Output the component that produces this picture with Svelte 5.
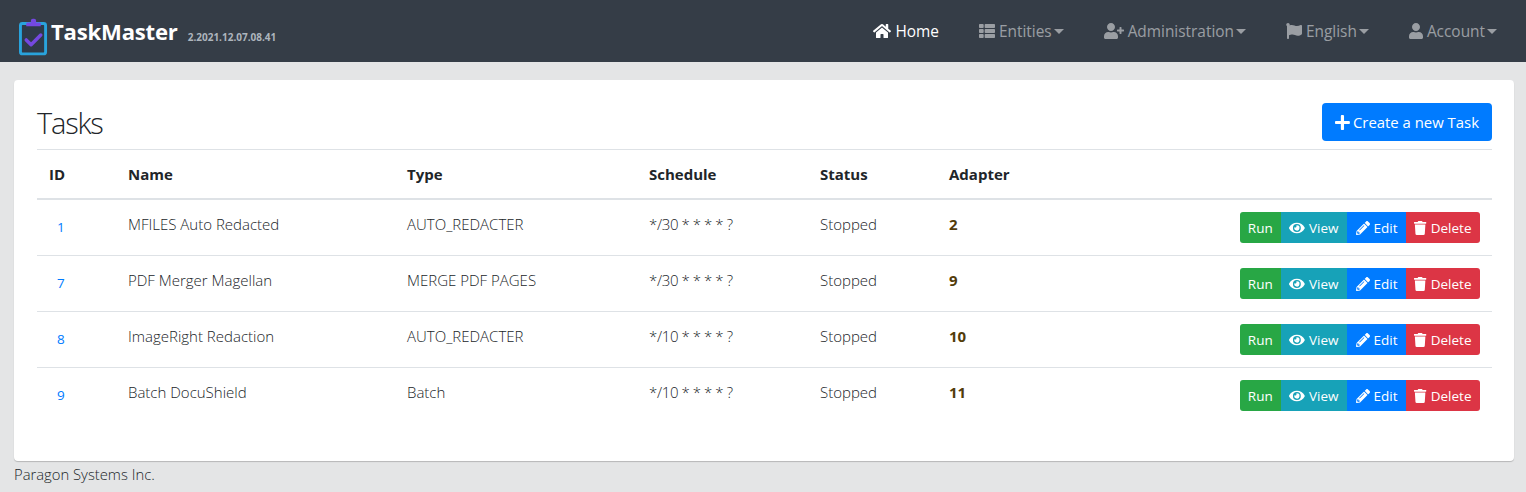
<script>
  const icons = {
    home: ['0 0 576 512', 'M280.37 148.26L96 300.11V464a16 16 0 0 0 16 16l112.06-.29a16 16 0 0 0 15.92-16V368a16 16 0 0 1 16-16h64a16 16 0 0 1 16 16v95.64a16 16 0 0 0 16 16.05L464 480a16 16 0 0 0 16-16V300L295.67 148.26a12.19 12.19 0 0 0-15.3 0zM571.6 251.47L488 182.56V44.05a12 12 0 0 0-12-12h-56a12 12 0 0 0-12 12v72.61L318.47 43a48 48 0 0 0-61 0L4.34 251.47a12 12 0 0 0-1.6 16.9l25.5 31A12 12 0 0 0 45.15 301l235.22-193.74a12.19 12.19 0 0 1 15.3 0L530.9 301a12 12 0 0 0 16.9-1.6l25.5-31a12 12 0 0 0-1.7-16.93z'],
    list: ['0 0 512 512', 'M149.333 216v80c0 13.255-10.745 24-24 24H24c-13.255 0-24-10.745-24-24v-80c0-13.255 10.745-24 24-24h101.333c13.255 0 24 10.745 24 24zM0 376v80c0 13.255 10.745 24 24 24h101.333c13.255 0 24-10.745 24-24v-80c0-13.255-10.745-24-24-24H24c-13.255 0-24 10.745-24 24zM125.333 32H24C10.745 32 0 42.745 0 56v80c0 13.255 10.745 24 24 24h101.333c13.255 0 24-10.745 24-24V56c0-13.255-10.745-24-24-24zm80 448H488c13.255 0 24-10.745 24-24v-80c0-13.255-10.745-24-24-24H205.333c-13.255 0-24 10.745-24 24v80c0 13.255 10.745 24 24 24zm-24-424v80c0 13.255 10.745 24 24 24H488c13.255 0 24-10.745 24-24V56c0-13.255-10.745-24-24-24H205.333c-13.255 0-24 10.745-24 24zm24 264H488c13.255 0 24-10.745 24-24v-80c0-13.255-10.745-24-24-24H205.333c-13.255 0-24 10.745-24 24v80c0 13.255 10.745 24 24 24z'],
    userPlus: ['0 0 640 512', 'M624 208h-64v-64c0-8.8-7.2-16-16-16h-32c-8.8 0-16 7.2-16 16v64h-64c-8.8 0-16 7.2-16 16v32c0 8.8 7.2 16 16 16h64v64c0 8.8 7.2 16 16 16h32c8.8 0 16-7.2 16-16v-64h64c8.8 0 16-7.2 16-16v-32c0-8.8-7.2-16-16-16zm-400 48c70.7 0 128-57.3 128-128S294.7 0 224 0 96 57.3 96 128s57.3 128 128 128zm89.6 32h-16.7c-22.2 10.2-46.9 16-72.9 16s-50.6-5.8-72.9-16h-16.7C60.2 288 0 348.2 0 422.4V464c0 26.5 21.5 48 48 48h352c26.5 0 48-21.5 48-48v-41.6c0-74.2-60.2-134.4-134.4-134.4z'],
    flag: ['0 0 512 512', 'M349.565 98.783C295.978 98.783 251.721 64 184.348 64c-24.955 0-47.309 4.384-68.045 12.013a55.947 55.947 0 0 0 3.586-23.562C118.117 24.015 94.806 1.206 66.338.048 34.345-1.254 8 24.296 8 56c0 19.026 9.497 35.825 24 45.945V488c0 13.255 10.745 24 24 24h16c13.255 0 24-10.745 24-24v-94.4c28.311-12.064 63.582-22.122 114.435-22.122 53.588 0 97.844 34.783 165.217 34.783 48.169 0 86.667-16.294 122.505-40.858C506.84 359.452 512 349.571 512 339.045v-243.1c0-23.393-24.269-38.87-45.485-29.016-34.338 15.948-76.454 31.854-116.95 31.854z'],
    user: ['0 0 448 512', 'M224 256c70.7 0 128-57.3 128-128S294.7 0 224 0 96 57.3 96 128s57.3 128 128 128zm89.6 32h-16.7c-22.2 10.2-46.9 16-72.9 16s-50.6-5.8-72.9-16h-16.7C60.2 288 0 348.2 0 422.4V464c0 26.5 21.5 48 48 48h352c26.5 0 48-21.5 48-48v-41.6c0-74.2-60.2-134.4-134.4-134.4z'],
    plus: ['0 0 448 512', 'M416 208H272V64c0-17.67-14.33-32-32-32h-32c-17.67 0-32 14.33-32 32v144H32c-17.67 0-32 14.33-32 32v32c0 17.67 14.33 32 32 32h144v144c0 17.67 14.33 32 32 32h32c17.67 0 32-14.33 32-32V304h144c17.67 0 32-14.33 32-32v-32c0-17.67-14.33-32-32-32z'],
    eye: ['0 0 576 512', 'M572.52 241.4C518.29 135.59 410.93 64 288 64S57.68 135.64 3.48 241.41a32.35 32.35 0 0 0 0 29.19C57.71 376.41 165.07 448 288 448s230.32-71.64 284.52-177.41a32.35 32.35 0 0 0 0-29.19zM288 400a144 144 0 1 1 144-144 143.93 143.93 0 0 1-144 144zm0-240a95.31 95.31 0 0 0-25.31 3.79 47.85 47.85 0 0 1-66.9 66.9A95.78 95.78 0 1 0 288 160z'],
    pencil: ['0 0 512 512', 'M497.9 142.1l-46.1 46.1c-4.7 4.7-12.3 4.7-17 0l-111-111c-4.7-4.7-4.7-12.3 0-17l46.1-46.1c18.7-18.7 49.1-18.7 67.9 0l60.1 60.1c18.8 18.7 18.8 49.1 0 67.9zM284.2 99.8L21.6 362.4.4 483.9c-2.9 16.4 11.4 30.6 27.8 27.8l121.5-21.3 262.6-262.6c4.7-4.7 4.7-12.3 0-17l-111-111c-4.8-4.7-12.4-4.7-17.1 0zM124.1 339.9c-5.5-5.5-5.5-14.3 0-19.8l154-154c5.5-5.5 14.3-5.5 19.8 0s5.5 14.3 0 19.8l-154 154c-5.5 5.5-14.3 5.5-19.8 0zM88 424h48v36.3l-64.5 11.3-31.1-31.1L51.7 376H88v48z'],
    trash: ['0 0 448 512', 'M432 32H312l-9.4-18.7A24 24 0 0 0 281.1 0H166.8a23.72 23.72 0 0 0-21.4 13.3L136 32H16A16 16 0 0 0 0 48v32a16 16 0 0 0 16 16h416a16 16 0 0 0 16-16V48a16 16 0 0 0-16-16zM53.2 467a48 48 0 0 0 47.9 45h245.8a48 48 0 0 0 47.9-45L416 128H32z']
  };

  const nav = [
    { label: 'Home', icon: 'home', active: true },
    { label: 'Entities', icon: 'list', caret: true },
    { label: 'Administration', icon: 'userPlus', caret: true },
    { label: 'English', icon: 'flag', caret: true },
    { label: 'Account', icon: 'user', caret: true }
  ];

  const tasks = [
    { id: 1, name: 'MFILES Auto Redacted', type: 'AUTO_REDACTER', schedule: '*/30 * * * * ?', status: 'Stopped', adapter: 2 },
    { id: 7, name: 'PDF Merger Magellan', type: 'MERGE PDF PAGES', schedule: '*/30 * * * * ?', status: 'Stopped', adapter: 9 },
    { id: 8, name: 'ImageRight Redaction', type: 'AUTO_REDACTER', schedule: '*/10 * * * * ?', status: 'Stopped', adapter: 10 },
    { id: 9, name: 'Batch DocuShield', type: 'Batch', schedule: '*/10 * * * * ?', status: 'Stopped', adapter: 11 }
  ];
</script>

{#snippet icon(name)}
  <svg class="ico" viewBox={icons[name][0]} aria-hidden="true"><path fill="currentColor" d={icons[name][1]} /></svg>
{/snippet}

<header class="navbar">
  <a class="brand" href="#top">
    <svg class="logo" viewBox="0 0 30 38" aria-hidden="true">
      <rect x="1.5" y="5" width="26" height="31.5" rx="2" fill="#2f3a48" stroke="#29a3dc" stroke-width="3" />
      <path d="M7.5 8V5.4a1.4 1.4 0 0 1 1.4-1.4h3.4V2a2 2 0 0 1 2-2h1.4a2 2 0 0 1 2 2v2h3.4a1.4 1.4 0 0 1 1.4 1.4V8z" fill="#7448e0" />
      <path d="M7.5 22l5 5 10-10" fill="none" stroke="#7448e0" stroke-width="3.6" stroke-linecap="round" stroke-linejoin="round" />
    </svg>
    <span class="title">TaskMaster</span>
    <span class="version">2.2021.12.07.08.41</span>
  </a>
  <nav class="menu">
    {#each nav as item}
      <a class="link" class:active={item.active} href="#top">
        {@render icon(item.icon)}
        <span>{item.label}</span>
        {#if item.caret}<i class="caret"></i>{/if}
      </a>
    {/each}
  </nav>
</header>

<main class="page">
  <section class="card">
    <div class="head">
      <h2>Tasks</h2>
      <a class="create" href="#top">{@render icon('plus')}<span>Create a new Task</span></a>
    </div>
    <table>
      <colgroup>
        <col class="c-id" /><col class="c-name" /><col class="c-type" /><col class="c-sched" /><col class="c-status" /><col class="c-adapter" /><col />
      </colgroup>
      <thead>
        <tr>
          <th>ID</th><th>Name</th><th>Type</th><th>Schedule</th><th>Status</th><th>Adapter</th><th></th>
        </tr>
      </thead>
      <tbody>
        {#each tasks as t}
          <tr>
            <td class="id"><a href="#top">{t.id}</a></td>
            <td class="up">{t.name}</td>
            <td class="up">{t.type}</td>
            <td class="up sched">{t.schedule}</td>
            <td class="up">{t.status}</td>
            <td class="up adapter">{t.adapter}</td>
            <td>
              <div class="group">
                <button class="run">Run</button>
                <button class="view">{@render icon('eye')}View</button>
                <button class="edit">{@render icon('pencil')}Edit</button>
                <button class="del">{@render icon('trash')}Delete</button>
              </div>
            </td>
          </tr>
        {/each}
      </tbody>
    </table>
  </section>
  <footer>Paragon Systems Inc.</footer>
</main>

<style>
  :global(body) {
    background: #e4e5e6;
    color: #212529;
    font-family: 'Open Sans', 'Noto Sans', sans-serif;
    font-weight: 300;
    font-size: 15px;
  }

  .ico { height: 1em; width: auto; display: inline-block; flex: none; }

  .navbar {
    height: 62px;
    background: #353d47;
    display: flex;
    align-items: center;
    justify-content: space-between;
    padding: 0 29px 0 19px;
  }
  .brand { display: flex; align-items: center; text-decoration: none; }
  .logo { width: 29px; height: 38px; margin-top: 11px; }
  .title { color: #fff; font-weight: 700; font-size: 22.1px; margin-left: 3px; margin-top: 0; letter-spacing: -0.2px; }
  .version { color: #adb5bd; font-weight: 700; font-size: 10px; margin: 12px 0 0 10px; }

  .menu { display: flex; gap: 40px; }
  .link {
    display: flex;
    align-items: center;
    gap: 4px;
    color: rgba(255, 255, 255, 0.5);
    text-decoration: none;
    font-size: 15.4px;
    font-weight: 400;
  }
  .link .ico { font-size: 16px; }
  .link.active { color: #fff; }
  .caret {
    width: 0; height: 0;
    margin-left: -2px;
    border-top: 5px solid currentColor;
    border-left: 5px solid transparent;
    border-right: 5px solid transparent;
  }

  .page { padding: 18px 12px 0 14px; }
  .card {
    background: #fff;
    height: 381px;
    box-sizing: border-box;
    padding: 23px 22px 0 23px;
    border-radius: 4px;
    box-shadow: 0 1px 1px rgba(0, 0, 0, 0.2);
  }
  .head {
    display: flex;
    justify-content: space-between;
    align-items: flex-start;
    height: 46px;
    border-bottom: 1px solid #dee2e6;
  }
  h2 { margin: 0; font-size: 29px; font-weight: 300; line-height: 40px; letter-spacing: -1.2px; }
  .create {
    display: flex;
    align-items: center;
    gap: 3px;
    height: 38px;
    box-sizing: border-box;
    padding: 0 13px;
    background: #007bff;
    color: #fff;
    border-radius: 4px;
    text-decoration: none;
    font-weight: 400;
    font-size: 14.9px;
  }
  .create .ico { font-size: 17px; }

  table { width: 100%; border-collapse: collapse; table-layout: fixed; }
  .c-id { width: 79px; }
  .c-name { width: 279px; }
  .c-type { width: 242px; }
  .c-sched { width: 171px; }
  .c-status { width: 129px; }
  .c-adapter { width: 120px; }
  th {
    height: 48px;
    padding: 0 12px;
    text-align: left;
    font-weight: 700;
    font-size: 15px;
    border-bottom: 2px solid #dee2e6;
    box-sizing: content-box;
  }
  td {
    height: 55px;
    padding: 0 12px;
    border-bottom: 1px solid #dee2e6;
    white-space: nowrap;
    box-sizing: border-box;
  }
  tbody tr { height: 56px; }
  tbody tr:last-child td { border-bottom: 0; }
  td.up { padding-bottom: 6px; }
  .id { padding-left: 20px; font-size: 13.5px; font-weight: 400; }
  .id a { color: #007bff; text-decoration: none; }
  .sched { letter-spacing: -0.3px; word-spacing: -0.3px; }
  .adapter { font-weight: 700; color: #523c0a; }

  .group { display: flex; justify-content: flex-end; }
  button {
    display: flex;
    align-items: center;
    gap: 4px;
    height: 31px;
    padding: 1px 8.5px 0;
    border: 0;
    color: #fff;
    font: 400 13.5px 'Open Sans', sans-serif;
  }
  button .ico { font-size: 14px; }
  .run { background: #28a745; border-radius: 3px 0 0 3px; padding: 1px 8px 0; }
  .view { background: #17a2b8; }
  .edit { background: #007bff; }
  .del { background: #dc3545; border-radius: 0 3px 3px 0; }

  footer { padding-top: 3px; font-size: 14.8px; }
</style>
